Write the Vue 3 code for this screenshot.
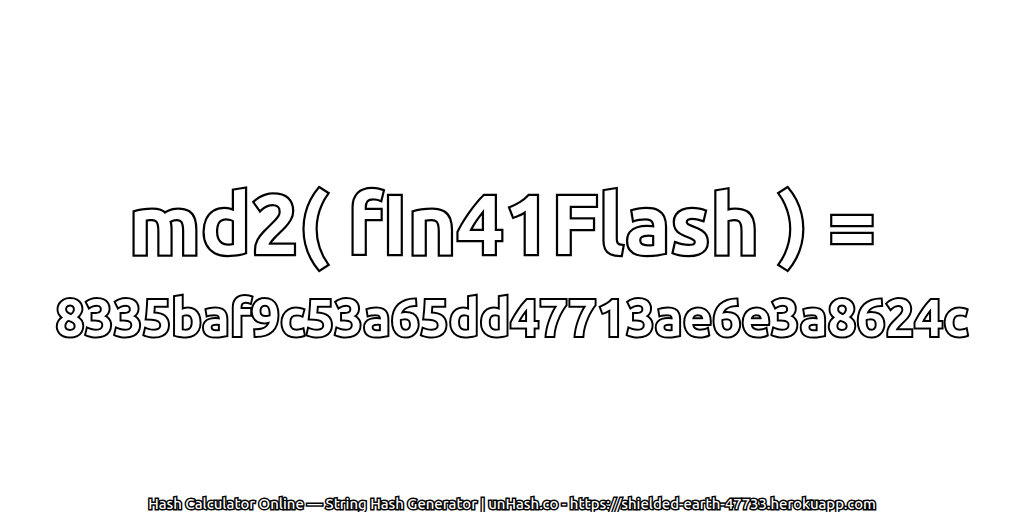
<template>
  <main class="page">
    <div class="center">
      <h1 class="title">md2( fIn41Flash ) =&nbsp;</h1>
      <p class="hash">8335baf9c53a65dd47713ae6e3a8624c</p>
    </div>
    <footer class="foot">Hash Calculator Online — String Hash Generator | unHash.co - https://shielded-earth-47733.herokuapp.com</footer>
  </main>
</template>

<script setup>
</script>

<style scoped>
.page {
  width: 1024px;
  height: 512px;
  display: flex;
  flex-direction: column;
  background: #fff;
  font-family: "Ubuntu", "Noto Sans", "Open Sans", sans-serif;
  overflow: hidden;
}
.center {
  flex: 1;
  display: flex;
  flex-direction: column;
  align-items: center;
  justify-content: center;
  gap: 20px;
  padding-top: 30px;
}
.title, .hash {
  margin: 0;
  color: #fff;
  white-space: nowrap;
  font-weight: 700;
  paint-order: stroke fill;
}
.title { font-size: 84px; line-height: 88px; -webkit-text-stroke: 4.5px #000; }
.hash { font-size: 51.3px; line-height: 60px; -webkit-text-stroke: 4px #000; }
.foot {
  text-align: center;
  font-size: 14.9px;
  font-weight: 500;
  line-height: 16px;
  color: #fff;
  -webkit-text-stroke: 3px #000;
  paint-order: stroke fill;
  white-space: nowrap;
}
</style>
